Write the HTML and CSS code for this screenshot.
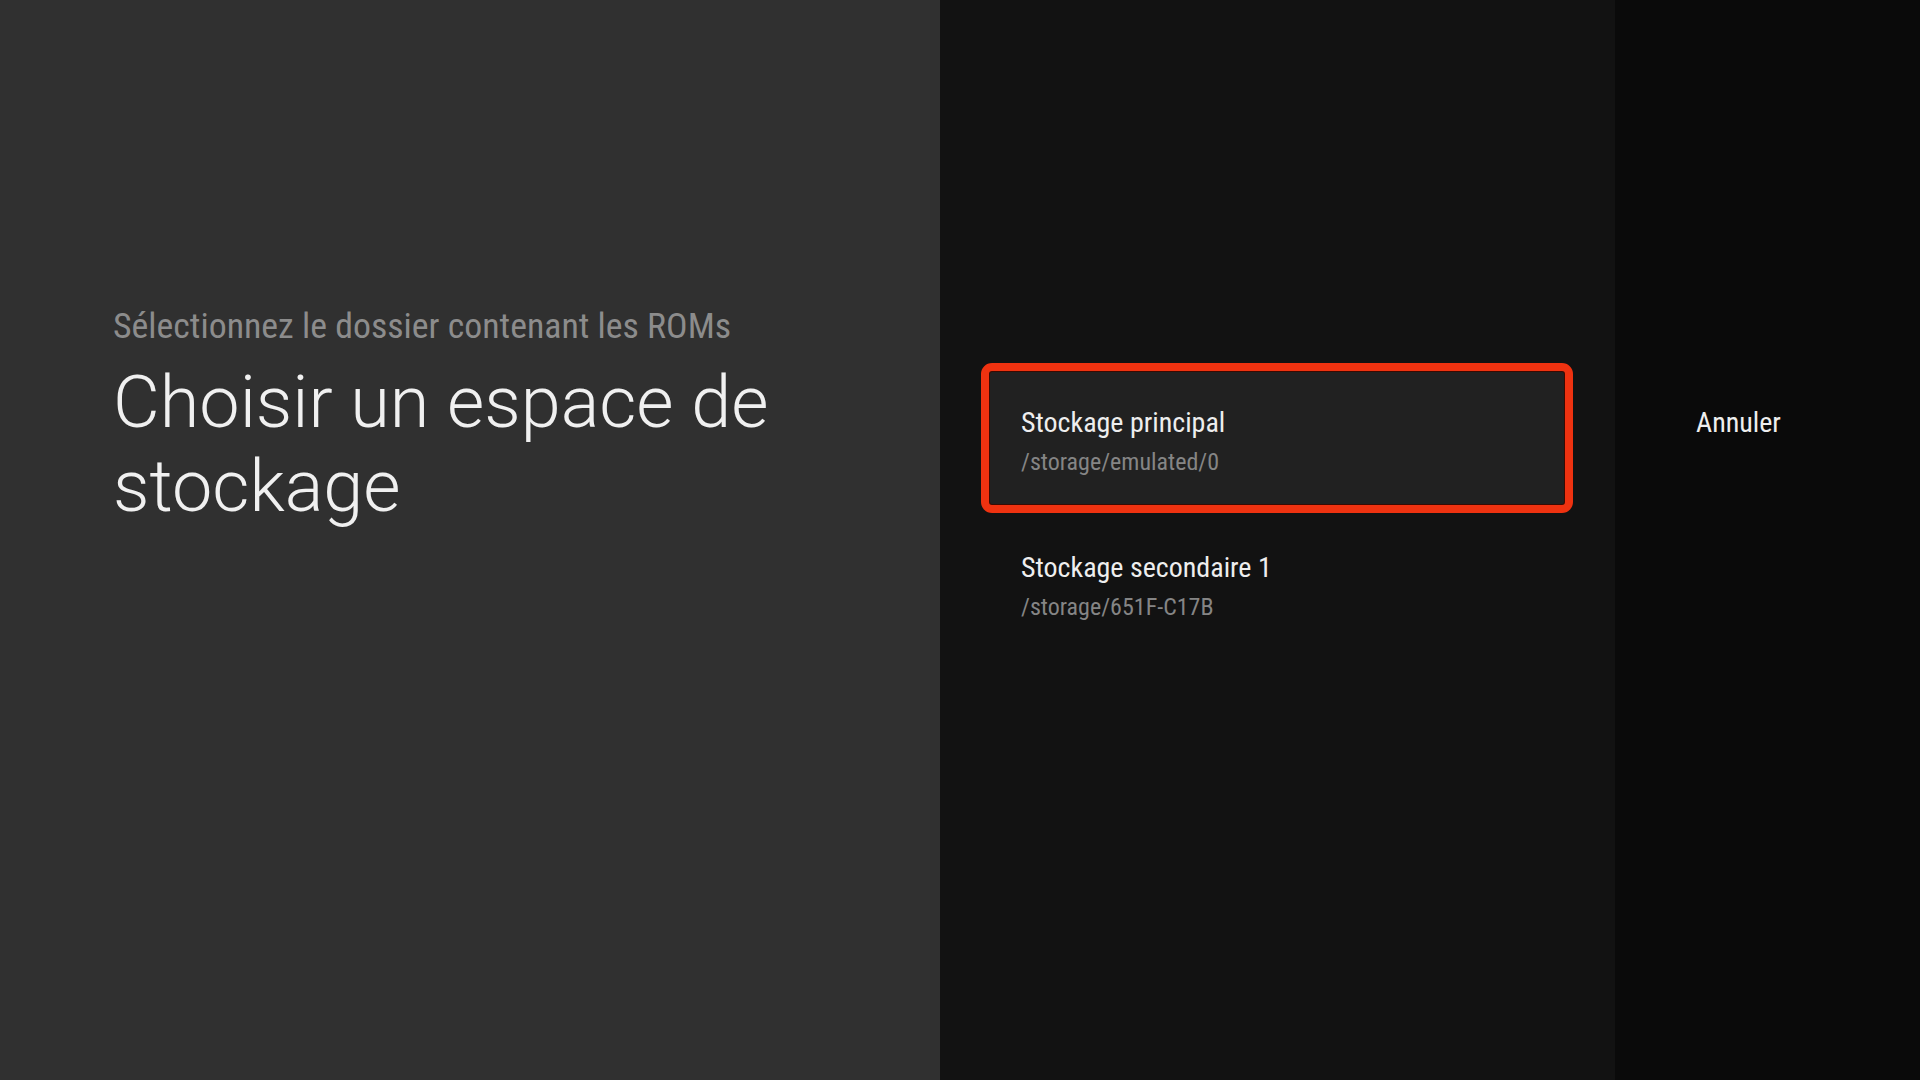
FILE: index.html
```html
<!DOCTYPE html>
<html lang="fr">
<head>
<meta charset="UTF-8">
<title>Choisir un espace de stockage</title>
<link rel="stylesheet" href="styles.css">
</head>
<body>

<div class="ecran">
  <div class="guidance">
    <div class="guidance-desc">Sélectionnez le dossier contenant les ROMs</div>
    <div class="guidance-titre">Choisir un espace de stockage</div>
  </div>

  <div class="actions">
    <div class="action selectionne">
      <div class="action-titre">Stockage principal</div>
      <div class="action-desc">/storage/emulated/0</div>
    </div>
    <div class="action">
      <div class="action-titre">Stockage secondaire 1</div>
      <div class="action-desc">/storage/651F-C17B</div>
    </div>
  </div>

  <div class="boutons">
    <div class="action">
      <div class="action-titre">Annuler</div>
    </div>
  </div>
</div>

</body>
</html>
```

FILE: styles.css
```css
html, body {
  margin: 0;
  height: 100%;
}
body {
  font-family: "Roboto Condensed", "Liberation Sans Narrow", "DejaVu Sans Condensed", Roboto, sans-serif;
  background: #0a0a0a;
  color: #eeeeee;
}
.ecran {
  display: flex;
  height: 1080px;
}

/* colonne de gauche */
.guidance {
  width: 940px;
  box-sizing: border-box;
  padding: 305px 150px 0 113px;
  background: #303030;
}
.guidance-desc {
  font-size: 35.8px;
  line-height: 42px;
  color: #8c8c8c;
}
.guidance-titre {
  margin-top: 14px;
  font-family: Roboto, sans-serif;
  font-weight: 300;
  font-size: 72px;
  line-height: 84px;
  color: #f0f0f0;
}

/* liste des choix */
.actions {
  width: 675px;
  box-sizing: border-box;
  padding: 371px 50px 0 49px;
  background: #121212;
  display: flex;
  flex-direction: column;
  gap: 11px;
}
.boutons {
  flex: 1;
  padding: 371px 0 0 49px;
  background: #0a0a0a;
}
.action {
  height: 134px;
  box-sizing: border-box;
  padding: 35px 32px 0 32px;
}
.action.selectionne {
  background: #212121;
  outline: 8px solid #ef3210;
  border-radius: 3px;
  box-shadow: inset 0 0 0 1px #3a0a02;
}
.action-titre {
  font-size: 28px;
  line-height: 34px;
  color: #eeeeee;
}
.action-desc {
  margin-top: 6px;
  font-size: 24px;
  line-height: 32px;
  color: #858585;
}
```
